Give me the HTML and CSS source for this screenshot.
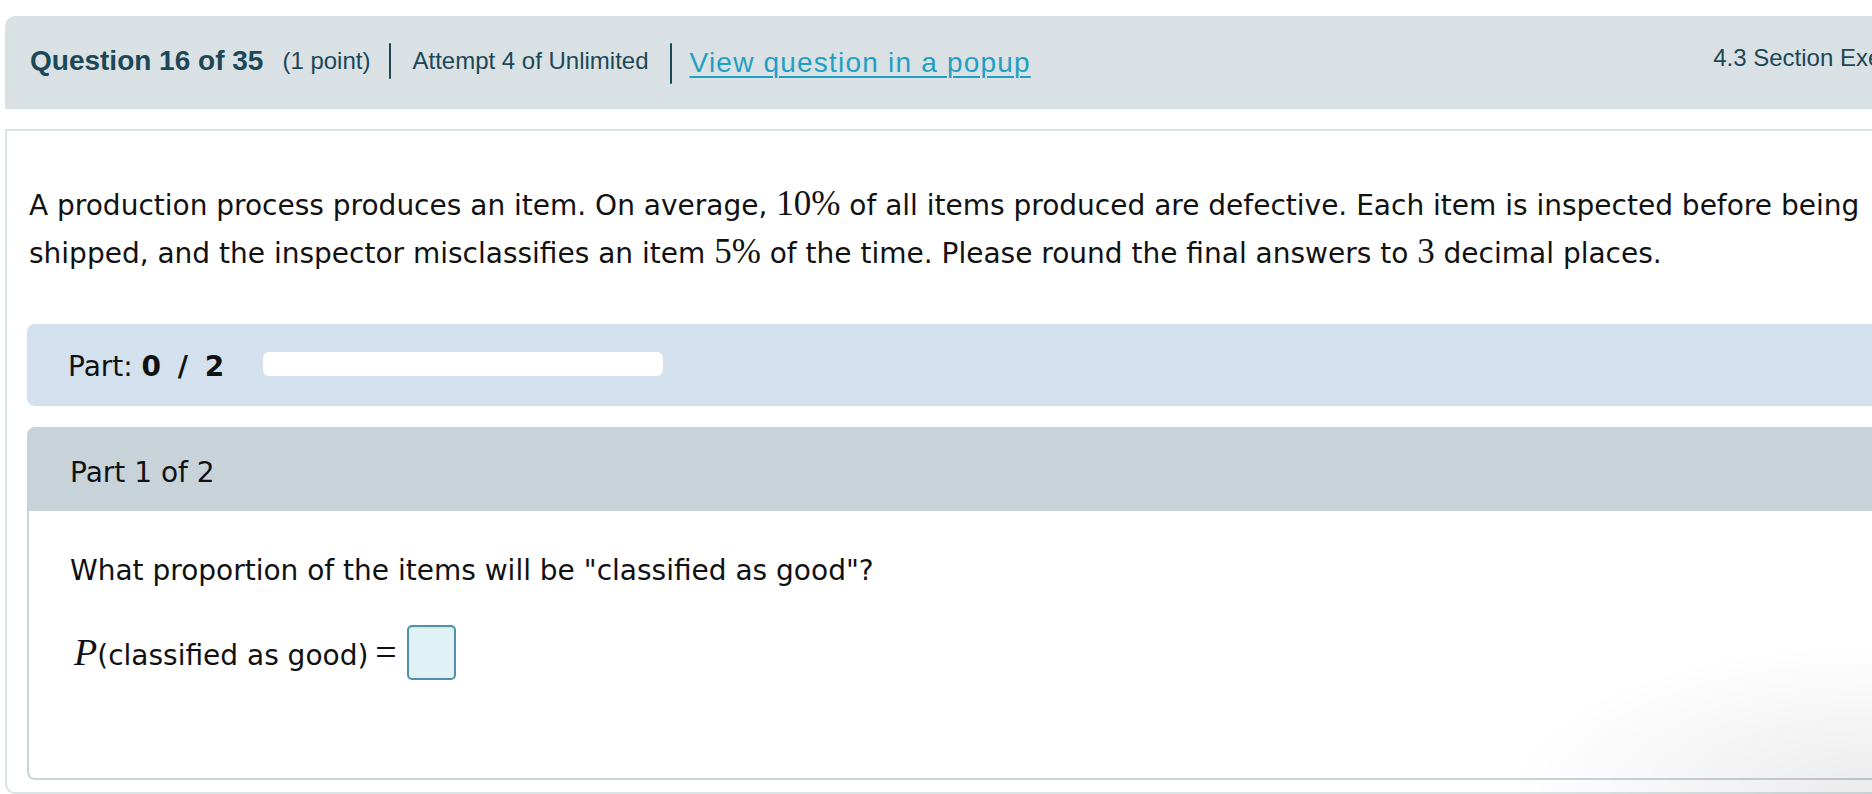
FILE: index.html
```html
<!DOCTYPE html>
<html lang="en">
<head>
<meta charset="utf-8">
<title>Question 16 of 35</title>
<link rel="stylesheet" href="styles.css">
</head>
<body>
<div class="page">
  <header class="qbar">
    <span class="q-title">Question 16 of 35</span>
    <span class="q-points">(1 point)</span>
    <span class="sep sep-a"></span>
    <span class="q-attempt">Attempt 4 of Unlimited</span>
    <span class="sep sep-b"></span>
    <a class="q-popup" href="#">View question in a popup</a>
    <span class="q-section">4.3 Section Exercises</span>
  </header>

  <main class="qbody">
    <p class="stem">A production process produces an item. On average, <span class="math">10%</span> of all items produced are defective. Each item is inspected before being shipped, and the inspector misclassifies an item <span class="math">5%</span> of the time. Please round the final answers to <span class="math">3</span> decimal places.</p>

    <div class="progress">
      <span class="progress-label">Part: <b class="progress-count">0 / 2</b></span>
      <span class="progress-bar"></span>
    </div>

    <section class="part">
      <div class="part-head">Part 1 of 2</div>
      <div class="part-body">
        <p class="prompt">What proportion of the items will be "classified as good"?</p>
        <p class="answer-row"><span class="mi">P</span><span class="mtext">(classified as good)</span><span class="mo">=</span><span class="answer-box"></span></p>
      </div>
    </section>
  </main>
</div>
<div class="corner-shade"></div>
</body>
</html>
```

FILE: styles.css
```css
html, body {
  margin: 0;
  padding: 0;
}

body {
  width: 1872px;
  height: 794px;
  overflow: hidden;
  background: #ffffff;
  font-family: "DejaVu Sans", Verdana, sans-serif;
  color: #111111;
}

.page {
  width: 2010px;
  padding: 16px 0 0 5px;
}

/* ---------- header bar ---------- */
.qbar {
  height: 93px;
  box-sizing: border-box;
  background: #d9e1e4;
  border-top-left-radius: 10px;
  display: flex;
  align-items: center;
  padding: 0 71px 0 25px;
  font-family: "Liberation Sans", Arial, Helvetica, sans-serif;
  color: #1c4757;
}

.q-title {
  font-size: 28px;
  font-weight: bold;
  margin-top: -4px;
}

.q-points {
  font-size: 24px;
  margin-left: 19px;
  margin-top: -4px;
}

.sep {
  display: block;
  width: 2px;
  background: #1c4757;
  border-radius: 1px;
}

.sep-a {
  height: 36px;
  margin: -3px 21px 0 19px;
}

.sep-b {
  height: 41px;
  margin: 2px 20px 0 21px;
}

.q-attempt {
  font-size: 24px;
  margin-top: -4px;
}

.q-popup {
  font-size: 28px;
  letter-spacing: 1.2px;
  color: #1f9fc3;
  text-decoration: underline;
  text-decoration-thickness: 2px;
  text-underline-offset: 4px;
  margin-top: 0;
  margin-left: -2px;
}

.q-section {
  margin-left: auto;
  font-size: 24px;
  margin-top: -10px;
}

/* ---------- main container ---------- */
.qbody {
  display: block;
  margin-top: 20px;
  border: 2px solid #dbe3e6;
  border-bottom-left-radius: 10px;
  padding: 0 0 12px 20px;
}

.stem {
  margin: 51px 0 46px 2px;
  width: 1850px;
  font-size: 28px;
  line-height: 48px;
}

.math {
  font-family: "Liberation Serif", "DejaVu Serif", serif;
  font-size: 35px;
  line-height: 1;
}

/* ---------- progress strip ---------- */
.progress {
  height: 82px;
  background: #d2e1ed;
  border-radius: 8px 0 0 8px;
  display: flex;
  align-items: center;
  padding-left: 41px;
  font-size: 28px;
}

.progress-label {
  margin-top: 2px;
}

.progress-count {
  font-weight: bold;
  word-spacing: 5px;
  letter-spacing: 1px;
}

.progress-bar {
  display: block;
  width: 400px;
  height: 24px;
  background: #ffffff;
  border-radius: 6px;
  margin-left: 38px;
  margin-top: -2px;
}

/* ---------- part card ---------- */
.part {
  margin-top: 21px;
}

.part-head {
  height: 84px;
  background: #c7d3d9;
  border-radius: 8px 0 0 0;
  display: flex;
  align-items: center;
  padding-left: 43px;
  font-size: 28px;
  padding-top: 6px;
  box-sizing: border-box;
}

.part-body {
  border-left: 2px solid #c9d4d9;
  border-bottom: 2px solid #c9d4d9;
  border-bottom-left-radius: 8px;
  padding: 36px 0 98px 41px;
  font-size: 28px;
  line-height: 48px;
}

.prompt {
  margin: 0;
}

.answer-row {
  margin: 30px 0 0 0;
  white-space: nowrap;
}

.mi {
  font-family: "Liberation Serif", "DejaVu Serif", serif;
  font-style: italic;
  font-size: 38px;
  line-height: 1;
  margin-left: 4px;
  margin-right: 0;
}

.mo {
  font-family: "Liberation Serif", "DejaVu Serif", serif;
  font-size: 38px;
  line-height: 1;
  margin: 0 10px 0 7px;
}

.answer-box {
  display: inline-block;
  width: 49px;
  height: 55px;
  box-sizing: border-box;
  border: 2px solid #4d93a5;
  border-radius: 5px;
  background: #e0f2f5;
  vertical-align: -15px;
  box-shadow: inset 0 1px 2px rgba(0, 0, 0, 0.08);
}

/* soft shading in the lower-right corner of the capture */
.corner-shade {
  position: fixed;
  right: 0;
  bottom: 0;
  width: 480px;
  height: 200px;
  pointer-events: none;
  background: radial-gradient(ellipse 100% 100% at 100% 100%, rgba(0, 0, 0, 0.08), rgba(0, 0, 0, 0) 75%);
}
```
